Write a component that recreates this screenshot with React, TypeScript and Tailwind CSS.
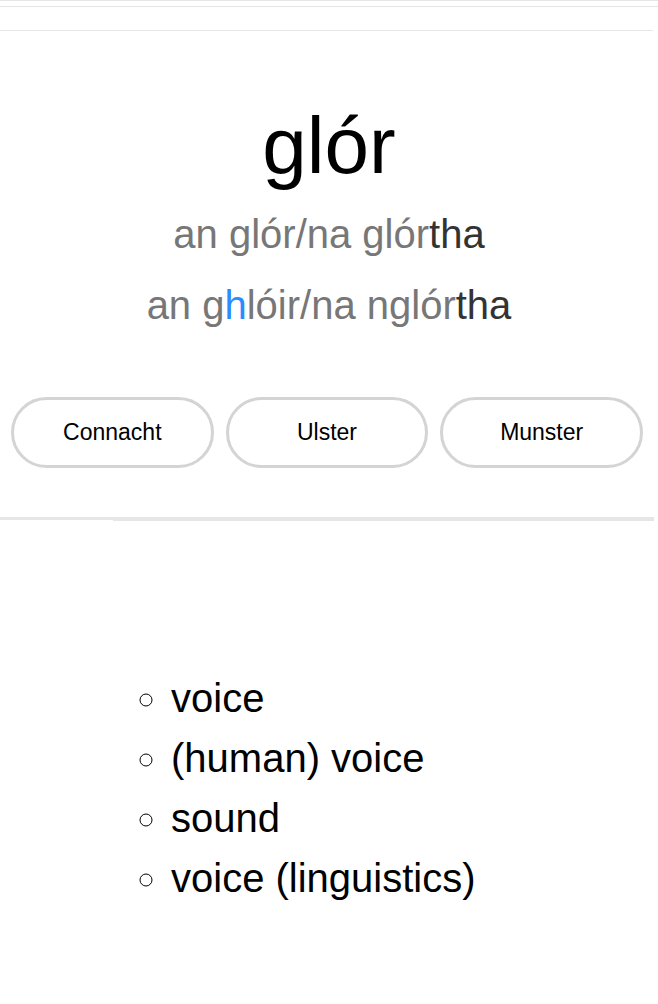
const senses = ['voice', '(human) voice', 'sound', 'voice (linguistics)'];
const dialects = ['Connacht', 'Ulster', 'Munster'];

export default function App() {
	return (
		<div className="min-h-[1004px] bg-white text-black font-['Liberation_Sans',Arial,sans-serif]">
			{/* header rules */}
			<div className="h-[6px] border-t border-[#e6e6e6]" />
			<div className="h-[24px] border-t border-[#e6e6e6]" />
			<div className="mr-[5px] border-t border-[#e6e6e6]" />

			<section className="pt-[75px] text-center">
				<h1 className="text-[80px] leading-[80px]">glór</h1>
				<div className="mt-[13px] text-[40px] leading-[71px] text-[#777777]">
					<p>
						an glór/na glór<span className="text-[#333333]">tha</span>
					</p>
					<p>
						an g<span className="text-[#2a8cff]">h</span>lóir/na nglór<span className="text-[#333333]">tha</span>
					</p>
				</div>
			</section>

			<div className="mt-[56px] flex gap-3 pl-[11px] pr-[15px]">
				{dialects.map((d) => (
					<button
						key={d}
						className="h-[71px] flex-1 rounded-full border-[3px] border-[#d4d4d4] bg-white text-[23px] text-black"
					>
						{d}
					</button>
				))}
			</div>

			<div className="mt-[49px] mr-[4px] h-[3px] bg-[#e6e6e6]" />
			<div className="ml-[113px] mr-[4px] h-[1px] bg-[#e6e6e6]" />

			<ul className="mt-[147px] list-[circle] pl-[171px] text-[40px] leading-[60px]">
				{senses.map((s) => (
					<li key={s}>{s}</li>
				))}
			</ul>
		</div>
	);
}
